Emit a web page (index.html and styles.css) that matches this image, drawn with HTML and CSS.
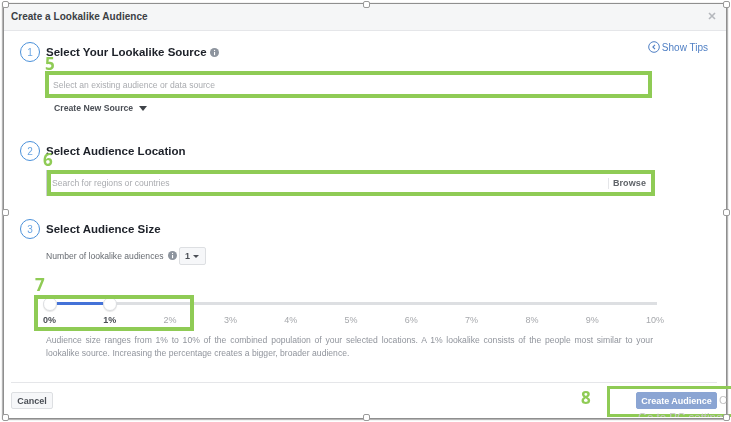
FILE: index.html
```html
<!DOCTYPE html>
<html lang="en">
<head>
<meta charset="utf-8">
<title>Create a Lookalike Audience</title>
<link rel="stylesheet" href="styles.css">
</head>
<body>
<div class="stage">
  <div class="modal">
    <header class="head">
      <span class="head-title">Create a Lookalike Audience</span>
      <svg class="close" width="8" height="8" viewBox="0 0 8 8"><path d="M1 1l6 6M7 1L1 7" stroke="#b5b8bd" stroke-width="1.6" fill="none"/></svg>
    </header>
    <main class="body">
      <section class="step step-one">
        <div class="step-head">
          <span class="num">1</span>
          <h2 class="step-title">Select Your Lookalike Source</h2>
          <svg class="info" width="9" height="9" viewBox="0 0 9 9"><circle cx="4.5" cy="4.5" r="4.5" fill="#8d949e"/><rect x="4" y="4" width="1.1" height="3.2" fill="#fff"/><rect x="4" y="1.9" width="1.1" height="1.2" fill="#fff"/></svg>
          <a class="tips">
            <svg width="12" height="12" viewBox="0 0 12 12"><circle cx="6" cy="6" r="5.3" fill="none" stroke="#4f7fc4" stroke-width="1"/><path d="M7 3.9L4.9 6 7 8.1" fill="none" stroke="#4f7fc4" stroke-width="1.1"/></svg>
            Show Tips
          </a>
        </div>
        <div class="field field-source"><span class="placeholder">Select an existing audience or data source</span></div>
        <div class="new-source">Create New Source <span class="caret caret-big"></span></div>
      </section>
      <section class="step step-two">
        <div class="step-head">
          <span class="num">2</span>
          <h2 class="step-title">Select Audience Location</h2>
        </div>
        <div class="location-wrap">
          <div class="field field-location">
            <span class="placeholder">Search for regions or countries</span>
            <span class="browse">Browse</span>
          </div>
        </div>
      </section>
      <section class="step step-three">
        <div class="step-head">
          <span class="num">3</span>
          <h2 class="step-title">Select Audience Size</h2>
        </div>
        <div class="count-row">
          <span>Number of lookalike audiences</span>
          <svg class="info" width="9" height="9" viewBox="0 0 9 9"><circle cx="4.5" cy="4.5" r="4.5" fill="#8d949e"/><rect x="4" y="4" width="1.1" height="3.2" fill="#fff"/><rect x="4" y="1.9" width="1.1" height="1.2" fill="#fff"/></svg>
          <span class="select">1 <span class="caret"></span></span>
        </div>
        <div class="slider">
          <div class="track"><div class="fill"></div></div>
          <span class="thumb thumb-a"></span>
          <span class="thumb thumb-b"></span>
          <div class="ticks">
            <span class="tick on">0%</span><span class="tick on">1%</span><span class="tick">2%</span><span class="tick">3%</span><span class="tick">4%</span><span class="tick">5%</span><span class="tick">6%</span><span class="tick">7%</span><span class="tick">8%</span><span class="tick">9%</span><span class="tick">10%</span>
          </div>
        </div>
        <p class="note"><span class="note-line">Audience size ranges from 1% to 10% of the combined population of your selected locations. A 1% lookalike consists of the people most similar to your</span><span class="note-last">lookalike source. Increasing the percentage creates a bigger, broader audience.</span></p>
      </section>
    </main>
    <footer class="foot">
      <button class="btn">Cancel</button>
      <button class="btn btn-primary">Create Audience</button>
    </footer>
  </div>

  <span class="mark mark-5">5</span>
  <span class="mark mark-6">6</span>
  <span class="mark mark-7">7</span>
  <span class="mark mark-8">8</span>
  <div class="box box-7"></div>
  <div class="box box-8"></div>
  <span class="watermark wm-c">C</span>
  <span class="watermark wm-go">Go to PC settings</span>

  <span class="handle h-tl"></span><span class="handle h-tc"></span><span class="handle h-tr"></span>
  <span class="handle h-ml"></span><span class="handle h-mr"></span>
  <span class="handle h-bl"></span><span class="handle h-bc"></span><span class="handle h-br"></span>
</div>
</body>
</html>
```
FILE: styles.css
```css
* { box-sizing: border-box; }
html, body { margin: 0; padding: 0; background: #fff; }
body { font-family: "Liberation Sans", Arial, sans-serif; color: #1d2129; overflow: hidden; }
.stage { position: relative; width: 731px; height: 422px; overflow: hidden; padding: 4px 5px 4px 4px; filter: blur(.35px); }

.modal { width: 722px; height: 414px; background: #fff; box-shadow: 0 0 0 1px #8f8f8f, -1px 0 1px 1px #b5b5b5, 1px 1px 1px 1px #b5b5b5; display: flex; flex-direction: column; }
.head { height: 27px; flex: none; background: #f5f6f7; border-bottom: 1px solid #e5e6e9; display: flex; align-items: center; justify-content: space-between; padding: 0 10px 2px 7px; }
.head-title { font-size: 10px; font-weight: 700; color: #3c3f45; letter-spacing: .03px; }

.body { flex: 1; padding: 0 0 0 16px; }
.step-head { display: flex; align-items: center; height: 20px; }
.num { width: 20px; height: 20px; border: 1.3px solid #4a90d9; border-radius: 50%; color: #6aa5e3; font-size: 10px; display: flex; align-items: center; justify-content: center; margin-right: 6px; flex: none; }
.step-title { margin: 0; font-size: 11.5px; font-weight: 700; color: #1d2129; }
.info { flex: none; }
.step-title + .info { margin-left: 3px; }
.tips { margin-left: auto; margin-right: 18px; margin-top: -10px; font-size: 10px; color: #4f7fc4; display: flex; align-items: center; gap: 2px; }

.step-one { padding-top: 11px; }
.field { display: flex; align-items: center; justify-content: space-between; border: 4px solid #8fcb55; background: #fff; }
.placeholder { font-size: 8.6px; color: #a9abaf; }
.field-source { width: 607px; height: 27px; margin: 9px 0 0 25px; padding-left: 4px; }
.new-source { margin: 5px 0 0 34px; font-size: 8.7px; font-weight: 700; color: #4b4f56; height: 11px; line-height: 11px; display: flex; align-items: center; }
.caret { display: inline-block; width: 0; height: 0; border-left: 3px solid transparent; border-right: 3px solid transparent; border-top: 3.5px solid #4b4f56; }
.caret-big { border-left-width: 4.5px; border-right-width: 4.5px; border-top-width: 5px; border-top-color: #3f4349; margin-left: 6px; }

.step-two { margin-top: 27px; }
.location-wrap { margin: 9px 0 0 26px; border-left: 1px solid #ccd0d5; width: 609px; height: 26px; }
.field-location { width: 608px; height: 26px; padding: 0 5px 0 1px; }
.browse { font-size: 9px; font-weight: 700; color: #5f6368; border-left: 1px solid #e5e6e9; padding-left: 4px; letter-spacing: .1px; line-height: 11px; }

.step-three { margin-top: 23px; }
.count-row { display: flex; align-items: center; height: 18px; margin: 8px 0 0 26px; font-size: 8.6px; color: #666a70; }
.count-row .info { margin: 0 2px 0 4px; transform: translateY(-1px); }
.select { width: 27px; height: 18px; border: 1px solid #dddfe2; background: #f6f7f9; border-radius: 2px; color: #4b4f56; font-weight: 700; font-size: 9px; display: flex; align-items: center; justify-content: center; gap: 3px; }

.slider { position: relative; width: 620px; height: 22px; margin: 36px 0 0 23px; }
.track { position: absolute; left: 7px; top: 1px; height: 3px; background: #dddfe2; width: 607px; }
.fill { width: 46px; height: 3px; margin-left: 7px; background: #4472d8; }
.thumb { position: absolute; top: -4px; width: 14px; height: 14px; border-radius: 50%; background: #fff; border: 1px solid #dcdee1; box-shadow: 0 1px 1px rgba(0,0,0,.1); }
.thumb-a { left: 0; }
.thumb-b { left: 60px; }
.ticks { position: absolute; left: 0; top: 14px; width: 621px; display: flex; justify-content: space-between; font-size: 9px; color: #a6a8ac; }
.tick { line-height: 11px; }
.tick.on { color: #4b4f56; font-weight: 700; }

.note { margin: 11px 0 0 26px; width: 607px; font-size: 8.6px; line-height: 13px; color: #90949c; }
.note-line { display: block; text-align: justify; text-align-last: justify; white-space: nowrap; }
.note-last { display: block; }

.foot { flex: none; height: 36px; margin: 0 9px 0 7px; border-top: 1px solid #e5e6e9; display: flex; justify-content: space-between; align-items: flex-start; padding-top: 9px; }
.btn { height: 17px; padding: 0; width: 42px; border: 1px solid #dddfe2; background: #f6f7f9; border-radius: 2px; font: 700 9px "Liberation Sans", Arial, sans-serif; color: #4b4f56; }
.btn-primary { width: 81px; background: #8ba5d3; border-color: #8ba5d3; color: #fff; }

.mark { position: absolute; font-family: "Open Sans", "Liberation Sans", sans-serif; font-size: 17px; line-height: 14px; font-weight: 700; color: #8fcb55; }
.mark-5 { left: 45px; top: 57px; }
.mark-6 { left: 43px; top: 153px; }
.mark-7 { left: 35px; top: 278px; }
.mark-8 { left: 581px; top: 391px; }
.box { position: absolute; border: 4px solid #8fcb55; }
.box-7 { left: 34px; top: 295px; width: 160px; height: 36px; }
.box-8 { left: 607px; top: 386px; width: 130px; height: 31px; border-width: 3px; }
.watermark { position: absolute; color: #c4c4c4; font-size: 11px; line-height: 12px; }
.wm-c { left: 719px; top: 394px; }
.wm-go { left: 638px; top: 411px; height: 6px; overflow: hidden; font-size: 11.5px; white-space: nowrap; }

.handle { position: absolute; width: 7px; height: 7px; margin: -3px 0 0 -3px; background: #fff; border: 1px solid #9a9a9a; border-radius: 2px; }
.h-tl { left: 5px; top: 4px; }
.h-tc { left: 366px; top: 4px; }
.h-tr { left: 726px; top: 4px; }
.h-ml { left: 5px; top: 212px; }
.h-mr { left: 726px; top: 212px; }
.h-bl { left: 5px; top: 417px; }
.h-bc { left: 366px; top: 417px; }
.h-br { left: 726px; top: 417px; }
```
